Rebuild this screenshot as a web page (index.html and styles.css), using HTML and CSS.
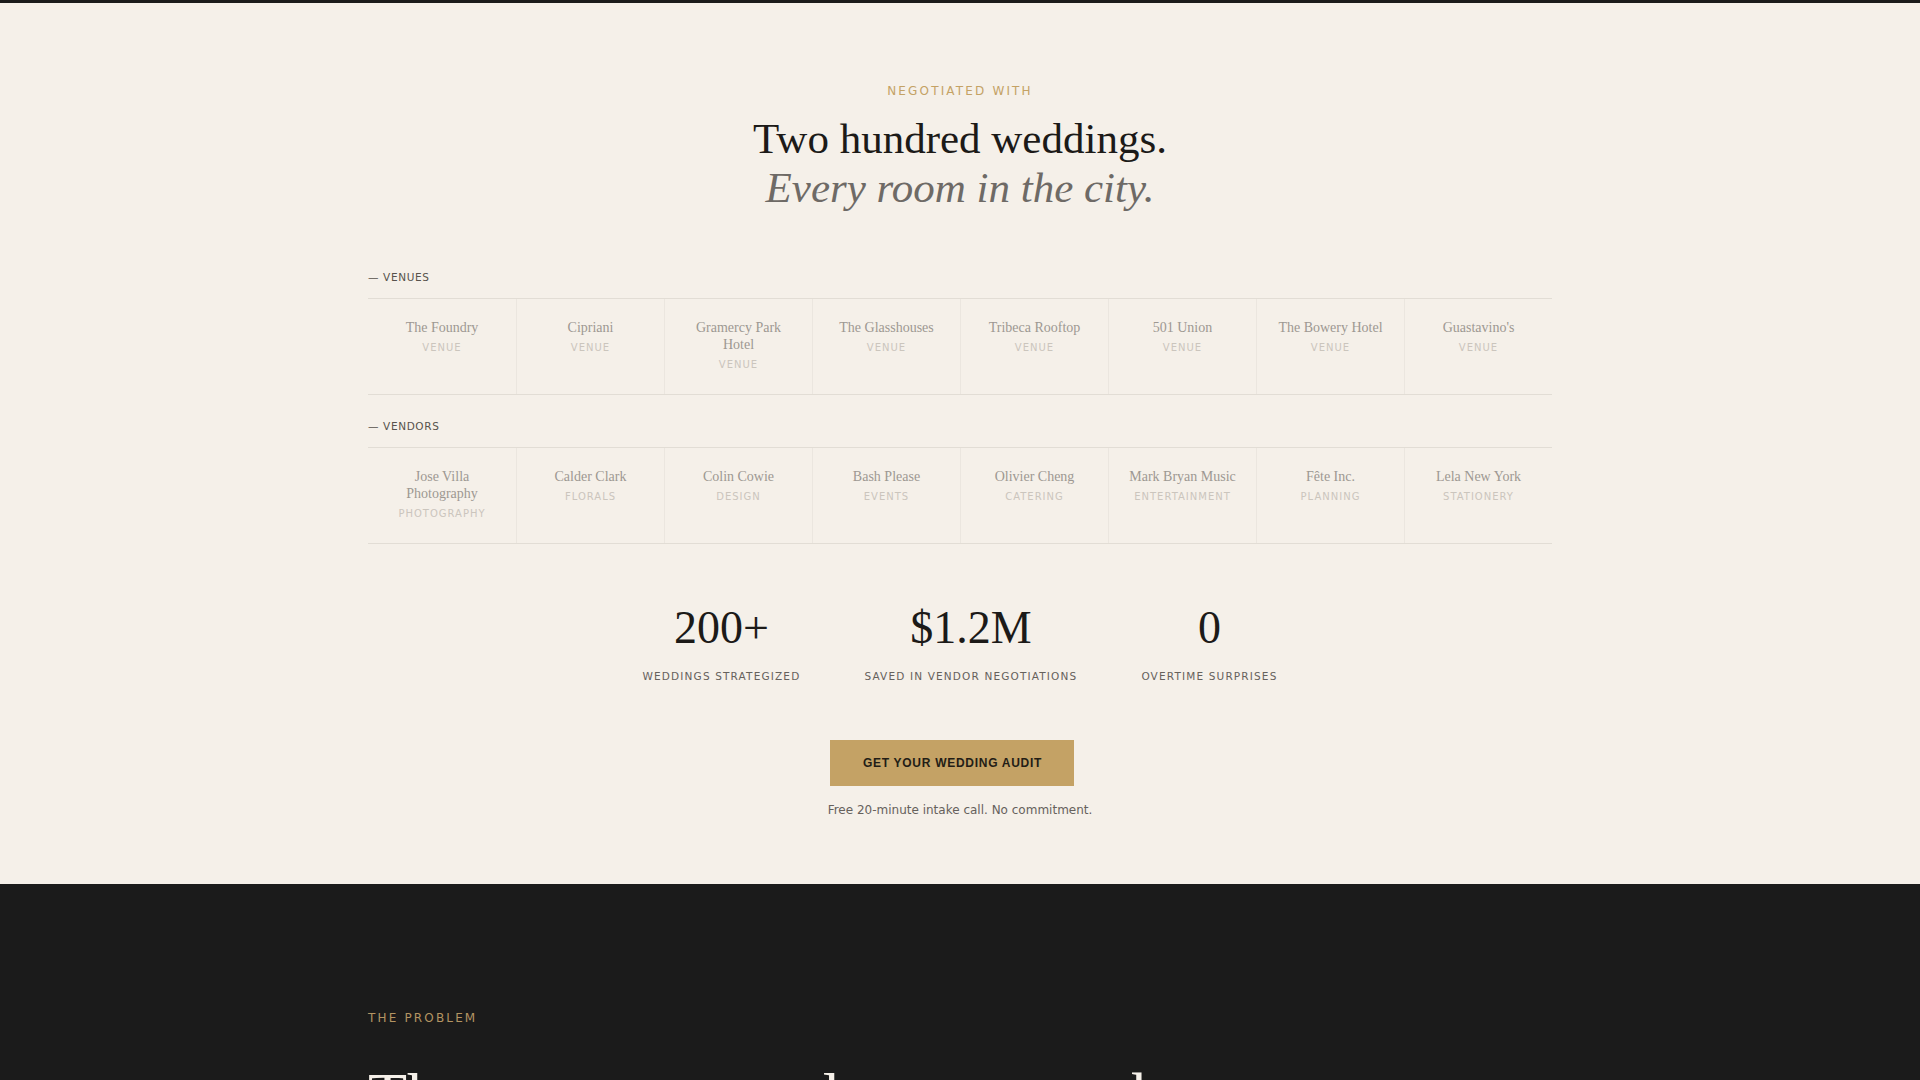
FILE: index.html
```html
<!DOCTYPE html>
<html lang="en">
<head>
    <meta charset="UTF-8">
    <meta name="viewport" content="width=device-width, initial-scale=1.0">
    <title>Wedding Audit</title>
    <link rel="stylesheet" href="styles.css">
</head>
<body>
    <section class="proof">
        <div class="container">
            <p class="eyebrow">Negotiated with</p>
            <h2 class="headline">
                Two hundred weddings.
                <em>Every room in the city.</em>
            </h2>

            <div class="roster">
                <h3 class="roster__label">&mdash; Venues</h3>
                <ul class="roster__grid">
                    <li class="roster__item"><span class="roster__name">The Foundry</span><span class="roster__type">Venue</span></li>
                    <li class="roster__item"><span class="roster__name">Cipriani</span><span class="roster__type">Venue</span></li>
                    <li class="roster__item"><span class="roster__name">Gramercy Park Hotel</span><span class="roster__type">Venue</span></li>
                    <li class="roster__item"><span class="roster__name">The Glasshouses</span><span class="roster__type">Venue</span></li>
                    <li class="roster__item"><span class="roster__name">Tribeca Rooftop</span><span class="roster__type">Venue</span></li>
                    <li class="roster__item"><span class="roster__name">501 Union</span><span class="roster__type">Venue</span></li>
                    <li class="roster__item"><span class="roster__name">The Bowery Hotel</span><span class="roster__type">Venue</span></li>
                    <li class="roster__item"><span class="roster__name">Guastavino's</span><span class="roster__type">Venue</span></li>
                </ul>
            </div>

            <div class="roster">
                <h3 class="roster__label">&mdash; Vendors</h3>
                <ul class="roster__grid">
                    <li class="roster__item"><span class="roster__name">Jose Villa Photography</span><span class="roster__type">Photography</span></li>
                    <li class="roster__item"><span class="roster__name">Calder Clark</span><span class="roster__type">Florals</span></li>
                    <li class="roster__item"><span class="roster__name">Colin Cowie</span><span class="roster__type">Design</span></li>
                    <li class="roster__item"><span class="roster__name">Bash Please</span><span class="roster__type">Events</span></li>
                    <li class="roster__item"><span class="roster__name">Olivier Cheng</span><span class="roster__type">Catering</span></li>
                    <li class="roster__item"><span class="roster__name">Mark Bryan Music</span><span class="roster__type">Entertainment</span></li>
                    <li class="roster__item"><span class="roster__name">Fête Inc.</span><span class="roster__type">Planning</span></li>
                    <li class="roster__item"><span class="roster__name">Lela New York</span><span class="roster__type">Stationery</span></li>
                </ul>
            </div>

            <div class="stats">
                <div class="stat">
                    <div class="stat__value">200+</div>
                    <div class="stat__label">Weddings strategized</div>
                </div>
                <div class="stat">
                    <div class="stat__value">$1.2M</div>
                    <div class="stat__label">Saved in vendor negotiations</div>
                </div>
                <div class="stat">
                    <div class="stat__value">0</div>
                    <div class="stat__label">Overtime surprises</div>
                </div>
            </div>

            <div class="cta">
                <a class="cta__button" href="#audit">Get your wedding audit</a>
                <p class="cta__note">Free 20-minute intake call. No commitment.</p>
            </div>
        </div>
    </section>

    <section class="problem">
        <div class="container">
            <p class="eyebrow eyebrow--left">The problem</p>
            <h2 class="problem__title">The average couple overpays by $40,000 before the first dance.</h2>
        </div>
    </section>
</body>
</html>
```

FILE: styles.css
```css
* {
	box-sizing: border-box;
	margin: 0;
	padding: 0;
}

:root {
	--cream: #f5f0e9;
	--ink: #1b1b1b;
	--gold: #c4a265;
	--grey: #6e6a66;
	--rule: #e2ddd5;
	--serif: "Liberation Serif", "Times New Roman", serif;
	--sans: "DejaVu Sans", Verdana, sans-serif;
}

body {
	background-color: var(--cream);
	color: var(--ink);
	font-family: var(--sans);
}

.container {
	max-width: 1280px;
	margin-inline: auto;
	padding: 0 48px;
}

.eyebrow {
	font-size: 12px;
	line-height: 16px;
	letter-spacing: 0.18em;
	text-transform: uppercase;
	color: var(--gold);
	text-align: center;
}

.eyebrow--left {
	text-align: left;
}

/* Proof section: client roster + numbers */
.proof {
	border-top: 3px solid var(--ink);
	padding: 80px 0 65px;
}

.proof .eyebrow {
	margin-bottom: 16px;
}

.headline {
	font-family: var(--serif);
	font-weight: 400;
	font-size: 43px;
	line-height: 1.13;
	text-align: center;
	color: #1c1a18;
	margin-bottom: 58px;
}

.headline em {
	display: block;
	color: var(--grey);
}

.roster + .roster {
	margin-top: 24px;
}

.roster__label {
	font-weight: 400;
	font-size: 10.5px;
	line-height: 14px;
	letter-spacing: 0.06em;
	text-transform: uppercase;
	color: #57524c;
	margin-bottom: 14px;
}

.roster__grid {
	list-style: none;
	display: grid;
	grid-template-columns: repeat(8, 1fr);
	border-top: 1px solid var(--rule);
	border-bottom: 1px solid var(--rule);
}

.roster__item {
	display: flex;
	flex-direction: column;
	align-items: center;
	text-align: center;
	padding: 20px 16px 22px;
}

.roster__item + .roster__item {
	border-left: 1px solid #ebe6df;
}

.roster__name {
	font-family: var(--serif);
	font-size: 14px;
	line-height: 17px;
	color: #9d9892;
}

.roster__type {
	font-size: 10px;
	line-height: 14px;
	letter-spacing: 0.1em;
	text-transform: uppercase;
	color: #cbc5bd;
	margin-top: 5px;
}

.stats {
	display: flex;
	justify-content: center;
	gap: 64px;
	margin-top: 61px;
}

.stat {
	text-align: center;
}

.stat__value {
	font-family: var(--serif);
	font-size: 46px;
	line-height: 1;
	color: #1c1a18;
}

.stat__label {
	font-size: 10.5px;
	line-height: 16px;
	letter-spacing: 0.11em;
	text-transform: uppercase;
	color: #66615c;
	margin-top: 17px;
}

.cta {
	display: flex;
	flex-direction: column;
	align-items: center;
	margin-top: 56px;
}

.cta__button {
	display: inline-block;
	background-color: var(--gold);
	color: #231d16;
	font-family: "Liberation Sans", Arial, sans-serif;
	font-weight: 700;
	font-size: 12px;
	line-height: 14px;
	letter-spacing: 0.06em;
	text-transform: uppercase;
	text-decoration: none;
	padding: 16px 32px 16px 33px;
	margin-right: 16px;
}

.cta__note {
	font-size: 12px;
	line-height: 18px;
	color: #66615c;
	margin-top: 15px;
}

/* Dark problem section */
.problem {
	background-color: var(--ink);
	padding: 126px 0 120px;
}

.problem .eyebrow {
	color: #b39462;
	margin-bottom: 35px;
}

.problem__title {
	font-family: var(--serif);
	font-weight: 400;
	font-size: 64px;
	line-height: 1.1;
	color: var(--cream);
	max-width: 980px;
}
```
